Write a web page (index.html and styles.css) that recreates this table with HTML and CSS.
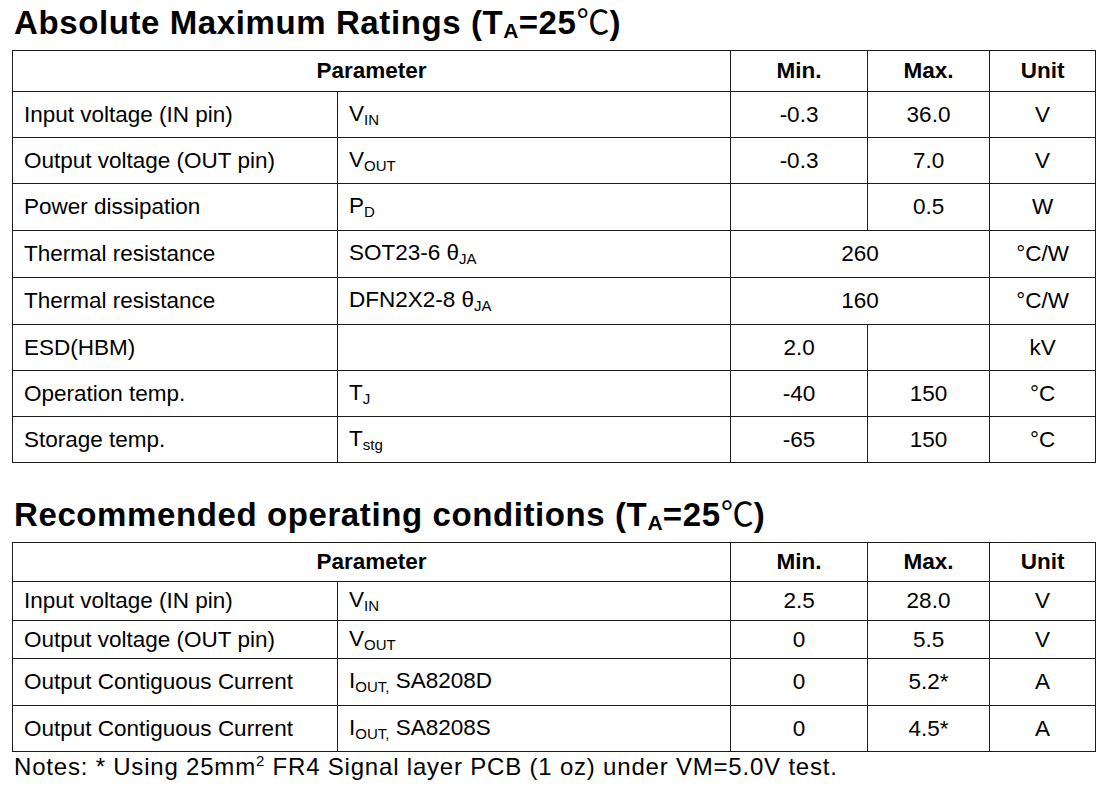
FILE: index.html
```html
<!DOCTYPE html>
<html>
<head>
<meta charset="utf-8">
<link rel="stylesheet" href="styles.css">
</head>
<body>
<div class="page">
  <h1 class="title first">Absolute Maximum Ratings (T<span class="tsub">A</span>=25<span class="deg">℃</span>)</h1>
  <table class="spec">
    <colgroup>
      <col class="c1"><col class="c2"><col class="c3"><col class="c4"><col class="c5">
    </colgroup>
    <tr class="head h41">
      <th colspan="2">Parameter</th><th>Min.</th><th>Max.</th><th>Unit</th>
    </tr>
    <tr class="h46">
      <td class="l">Input voltage (IN pin)</td><td class="l">V<span class="sub">IN</span></td><td>-0.3</td><td>36.0</td><td>V</td>
    </tr>
    <tr class="h46">
      <td class="l">Output voltage (OUT pin)</td><td class="l">V<span class="sub">OUT</span></td><td>-0.3</td><td>7.0</td><td>V</td>
    </tr>
    <tr class="h47">
      <td class="l">Power dissipation</td><td class="l">P<span class="sub">D</span></td><td></td><td>0.5</td><td>W</td>
    </tr>
    <tr class="h47">
      <td class="l">Thermal resistance</td><td class="l">SOT23-6 θ<span class="sub">JA</span></td><td colspan="2">260</td><td>°C/W</td>
    </tr>
    <tr class="h47">
      <td class="l">Thermal resistance</td><td class="l">DFN2X2-8 θ<span class="sub">JA</span></td><td colspan="2">160</td><td>°C/W</td>
    </tr>
    <tr class="h46">
      <td class="l">ESD(HBM)</td><td class="l"></td><td>2.0</td><td></td><td>kV</td>
    </tr>
    <tr class="h46">
      <td class="l">Operation temp.</td><td class="l">T<span class="sub">J</span></td><td>-40</td><td>150</td><td>°C</td>
    </tr>
    <tr class="h46">
      <td class="l">Storage temp.</td><td class="l">T<span class="sub">stg</span></td><td>-65</td><td>150</td><td>°C</td>
    </tr>
  </table>

  <h1 class="title second">Recommended operating conditions (T<span class="tsub">A</span>=25<span class="deg">℃</span>)</h1>
  <table class="spec">
    <colgroup>
      <col class="c1"><col class="c2"><col class="c3"><col class="c4"><col class="c5">
    </colgroup>
    <tr class="head h39">
      <th colspan="2">Parameter</th><th>Min.</th><th>Max.</th><th>Unit</th>
    </tr>
    <tr class="h39">
      <td class="l">Input voltage (IN pin)</td><td class="l">V<span class="sub">IN</span></td><td>2.5</td><td>28.0</td><td>V</td>
    </tr>
    <tr class="h38">
      <td class="l">Output voltage (OUT pin)</td><td class="l">V<span class="sub">OUT</span></td><td>0</td><td>5.5</td><td>V</td>
    </tr>
    <tr class="h47">
      <td class="l">Output Contiguous Current</td><td class="l">I<span class="sub">OUT,</span> SA8208D</td><td>0</td><td>5.2*</td><td>A</td>
    </tr>
    <tr class="h46">
      <td class="l">Output Contiguous Current</td><td class="l">I<span class="sub">OUT,</span> SA8208S</td><td>0</td><td>4.5*</td><td>A</td>
    </tr>
  </table>
  <p class="notes">Notes: * Using 25mm<span class="sup">2</span> FR4 Signal layer PCB (1 oz) under VM=5.0V test.</p>
</div>
</body>
</html>
```
FILE: styles.css
```css
html, body {
  margin: 0;
  padding: 0;
  background: #ffffff;
}
body {
  font-family: "Liberation Sans", Arial, "Noto Sans CJK SC", sans-serif;
  color: #000;
}
.page {
  padding: 0 0 0 12px;
  width: 1084px;
}
.title {
  font-size: 33px;
  letter-spacing: 0.6px;
  line-height: 36px;
  height: 36px;
  font-weight: 700;
  margin: 0 0 10px 2px;
  white-space: nowrap;
}
.title.first {
  padding-top: 4px;
}
.title.second {
  margin-top: 33px;
}
.tsub {
  font-size: 21px;
  letter-spacing: 0.3px;
  position: relative;
  top: 4px;
}
.deg {
  font-family: "Noto Sans CJK SC", "DejaVu Sans", sans-serif;
  font-weight: 400;
  line-height: 1;
  letter-spacing: 0;
}
.spec {
  border-collapse: collapse;
  table-layout: fixed;
  width: 1083px;
  font-size: 22.5px;
}
.c1 { width: 325px; }
.c2 { width: 393px; }
.c3 { width: 137px; }
.c4 { width: 122px; }
.c5 { width: 106px; }
.spec th,
.spec td {
  border: 1px solid #1c1c1c;
  padding: 0;
  text-align: center;
  vertical-align: middle;
  white-space: nowrap;
  line-height: 26px;
}
.spec th {
  font-weight: 700;
}
.spec td.l {
  text-align: left;
  padding-left: 11px;
}
.h38 { height: 38px; }
.h39 { height: 39px; }
.h41 { height: 41px; }
.h46 { height: 46px; }
.h47 { height: 47px; }
.sub {
  font-size: 15px;
  position: relative;
  top: 4px;
}
.notes {
  margin: 2px 0 0 2px;
  font-size: 24px;
  letter-spacing: 0.8px;
  line-height: 26px;
  white-space: nowrap;
}
.sup {
  font-size: 15px;
  position: relative;
  top: -9px;
}
```
